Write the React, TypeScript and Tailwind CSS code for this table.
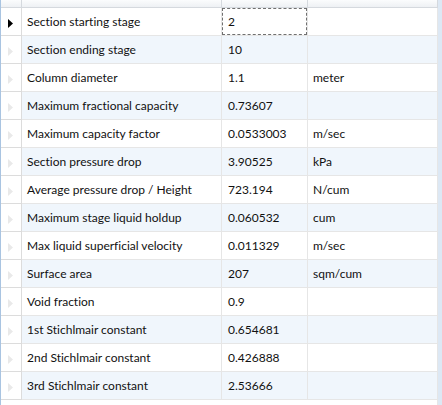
import React from 'react';

const rows: [string, string, string][] = [
  ['Section starting stage', '2', ''],
  ['Section ending stage', '10', ''],
  ['Column diameter', '1.1', 'meter'],
  ['Maximum fractional capacity', '0.73607', ''],
  ['Maximum capacity factor', '0.0533003', 'm/sec'],
  ['Section pressure drop', '3.90525', 'kPa'],
  ['Average pressure drop / Height', '723.194', 'N/cum'],
  ['Maximum stage liquid holdup', '0.060532', 'cum'],
  ['Max liquid superficial velocity', '0.011329', 'm/sec'],
  ['Surface area', '207', 'sqm/cum'],
  ['Void fraction', '0.9', ''],
  ['1st Stichlmair constant', '0.654681', ''],
  ['2nd Stichlmair constant', '0.426888', ''],
  ['3rd Stichlmair constant', '2.53666', ''],
];

const Arrow = ({ active }: { active: boolean }) => (
  <svg width="5" height="9" viewBox="0 0 5 9" className="mt-[3px]">
    <path d="M0 0 L5 4.5 L0 9 Z" fill={active ? '#000' : '#e9e9e9'} />
  </svg>
);

const App = () => {
  return (
    <div className="w-[442px] h-[405px] bg-white flex overflow-hidden text-[12px] text-[#111] [font-variant-ligatures:none]" style={{ fontFamily: 'Lato, "Liberation Sans", sans-serif' }}>
      <div className="w-[1px] bg-[#a9c4e1]" />
      <div className="flex flex-col">
        <div className="flex h-[8px] border-b border-[#d5d9de] bg-gradient-to-b from-[#fbfcfd] to-[#eef1f4]">
          <div className="w-[21px] border-r border-[#d5d9de]" />
          <div className="w-[200px] border-r border-[#d5d9de]" />
          <div className="w-[86px] border-r border-[#d5d9de]" />
          <div className="w-[130px] border-r border-[#d5d9de]" />
        </div>
        {rows.map(([label, value, unit], i) => {
          const alt = i % 2 === 1;
          return (
            <div key={i} className="flex h-[28px]">
              <div className="w-[21px] flex items-center pl-[7px] border-r border-b border-[#dcdcdc] bg-white">
                <Arrow active={i === 0} />
              </div>
              <div className={`w-[200px] flex items-center pl-[5px] pt-[1px] border-r border-b border-[#e6e6e6] ${alt ? 'bg-[#f0f6fc]' : 'bg-white'}`}>
                {label}
              </div>
              <div className={`w-[86px] relative flex items-center pl-[6px] pt-[1px] border-r border-b border-[#e6e6e6] ${alt ? 'bg-[#f0f6fc]' : 'bg-white'}`}>
                {i === 0 && <div className="absolute left-0 top-0 right-0 bottom-0 border border-dashed border-[#707070]" />}
                {value}
              </div>
              <div className={`w-[130px] flex items-center pl-[5px] pt-[1px] border-r border-b border-[#e6e6e6] ${alt ? 'bg-[#f0f6fc]' : 'bg-white'}`}>
                {unit}
              </div>
            </div>
          );
        })}
        <div className="flex flex-1">
          <div className="w-[21px]" />
          <div className="w-[200px]" />
          <div className="w-[86px]" />
          <div className="w-[130px] border-r border-[#e6e6e6]" />
        </div>
      </div>
      <div className="w-[4px] bg-[#dde8f4]" />
    </div>
  );
};

export default App;
